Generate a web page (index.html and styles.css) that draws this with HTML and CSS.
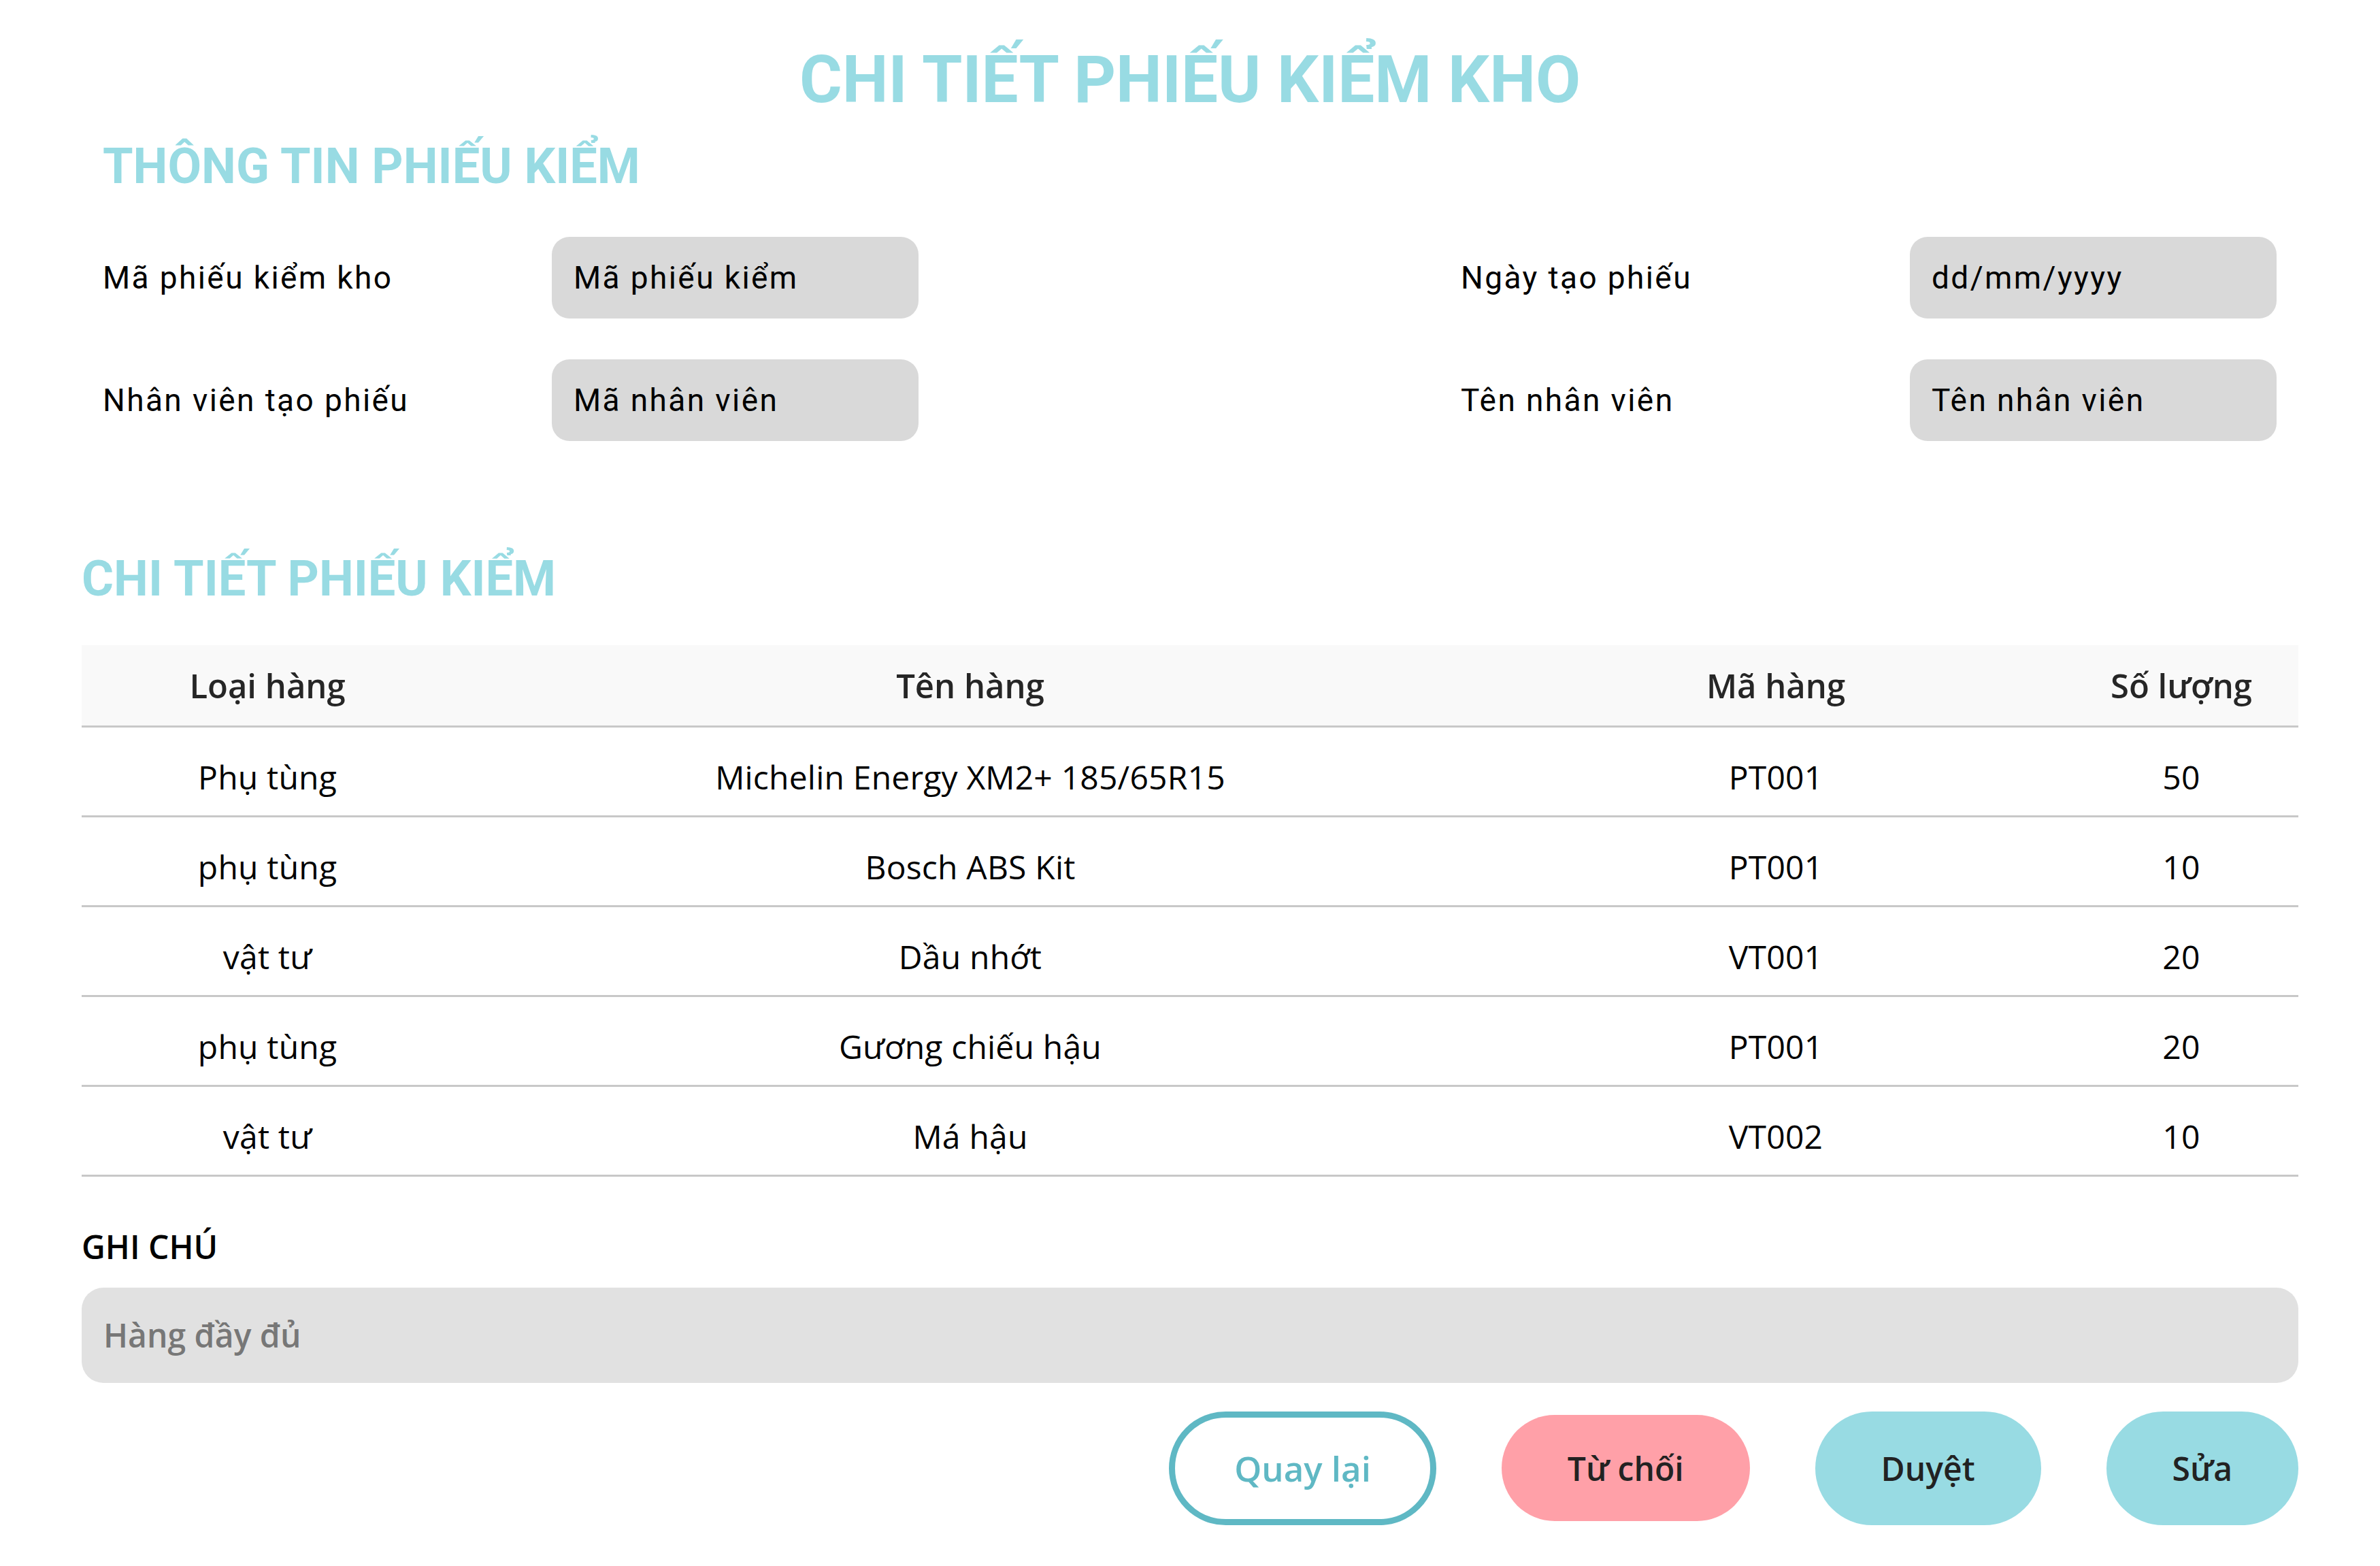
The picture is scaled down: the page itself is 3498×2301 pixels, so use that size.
FILE: index.html
```html
<!DOCTYPE html>
<html lang="vi">
<head>
<meta charset="utf-8">
<title>Chi tiết phiếu kiểm kho</title>
<link rel="stylesheet" href="styles.css">
</head>
<body>
<main class="page">
  <h1 class="title">CHI TIẾT PHIẾU KIỂM KHO</h1>

  <h2 class="section-title section-title--info">THÔNG TIN PHIẾU KIỂM</h2>
  <section class="info">
    <div class="info-group">
      <div class="info-label">Mã phiếu kiểm kho</div>
      <div class="info-box">Mã phiếu kiểm</div>
      <div class="info-label">Nhân viên tạo phiếu</div>
      <div class="info-box">Mã nhân viên</div>
    </div>
    <div class="info-group">
      <div class="info-label">Ngày tạo phiếu</div>
      <div class="info-box">dd/mm/yyyy</div>
      <div class="info-label">Tên nhân viên</div>
      <div class="info-box">Tên nhân viên</div>
    </div>
  </section>

  <h2 class="section-title section-title--detail">CHI TIẾT PHIẾU KIỂM</h2>
  <table class="items">
    <colgroup>
      <col class="col-type">
      <col class="col-name">
      <col class="col-code">
      <col class="col-qty">
    </colgroup>
    <thead>
      <tr><th>Loại hàng</th><th>Tên hàng</th><th>Mã hàng</th><th>Số lượng</th></tr>
    </thead>
    <tbody>
      <tr><td>Phụ tùng</td><td>Michelin Energy XM2+ 185/65R15</td><td>PT001</td><td>50</td></tr>
      <tr><td>phụ tùng</td><td>Bosch ABS Kit</td><td>PT001</td><td>10</td></tr>
      <tr><td>vật tư</td><td>Dầu nhớt</td><td>VT001</td><td>20</td></tr>
      <tr><td>phụ tùng</td><td>Gương chiếu hậu</td><td>PT001</td><td>20</td></tr>
      <tr><td>vật tư</td><td>Má hậu</td><td>VT002</td><td>10</td></tr>
    </tbody>
  </table>

  <div class="note-label">GHI CHÚ</div>
  <div class="note-box">Hàng đầy đủ</div>

  <div class="actions">
    <button class="btn btn--back">Quay lại</button>
    <button class="btn btn--reject">Từ chối</button>
    <button class="btn btn--approve">Duyệt</button>
    <button class="btn btn--edit">Sửa</button>
  </div>
</main>
</body>
</html>
```

FILE: styles.css
```css
* { box-sizing: border-box; }

html, body {
  margin: 0;
  padding: 0;
  background: #ffffff;
}

body {
  font-family: "Open Sans", "Liberation Sans", sans-serif;
  color: #000;
}

.page {
  padding: 61px 120px 40px;
}

.title {
  margin: 0;
  font-family: Roboto, "Liberation Sans", sans-serif;
  font-weight: 700;
  font-size: 96px;
  line-height: 112px;
  color: #98dbe3;
  text-align: center;
}

.section-title {
  margin: 0;
  font-family: Roboto, "Liberation Sans", sans-serif;
  font-weight: 700;
  font-size: 72px;
  line-height: 84px;
  color: #98dbe3;
}

.section-title--info {
  margin-top: 30px;
  padding-left: 31px;
}

.section-title--detail {
  margin-top: 161px;
}

.info {
  margin-top: 61px;
  padding: 0 32px 0 31px;
  display: flex;
  justify-content: space-between;
}

.info-group {
  display: grid;
  grid-template-columns: 660px 539px;
  row-gap: 60px;
  align-items: center;
}

.info-label {
  font-family: Roboto, "Liberation Sans", sans-serif;
  font-size: 46px;
  letter-spacing: 2.4px;
  color: #000;
}

.info-box {
  height: 120px;
  display: flex;
  align-items: center;
  padding-left: 32px;
  background: #d9d9d9;
  border-radius: 26px;
  font-family: Roboto, "Liberation Sans", sans-serif;
  font-size: 46px;
  letter-spacing: 2.4px;
  color: #000;
}

.items {
  margin-top: 55px;
  width: 100%;
  border-collapse: collapse;
  table-layout: fixed;
}

.col-type { width: 546px; }
.col-name { width: 1520px; }
.col-code { width: 848px; }
.col-qty { width: 344px; }

.items th,
.items td {
  padding: 0;
  text-align: center;
  border-bottom: 3px solid #c8c8c8;
}

.items th {
  height: 119px;
  background: #f9f9f9;
  font-weight: 600;
  font-size: 49px;
  color: #262626;
}

.items td {
  height: 132px;
  padding-top: 16px;
  font-size: 48px;
  letter-spacing: 0.2px;
  color: #000;
}

.note-label {
  margin-top: 70px;
  font-weight: 600;
  font-size: 48px;
  line-height: 65px;
  color: #000;
}

.note-box {
  margin-top: 28px;
  height: 140px;
  display: flex;
  align-items: center;
  padding-left: 32px;
  background: #e1e1e1;
  border-radius: 32px;
  font-weight: 600;
  font-size: 48px;
  color: #777777;
}

.actions {
  margin-top: 42px;
  display: flex;
  justify-content: flex-end;
  align-items: center;
  gap: 96px;
}

.btn {
  height: 167px;
  padding: 0 97px;
  border: none;
  border-radius: 84px;
  font-family: "Open Sans", "Liberation Sans", sans-serif;
  font-weight: 600;
  font-size: 48px;
  color: #222;
  cursor: pointer;
}

.btn--back {
  background: #fff;
  border: 9px solid #5fb8c4;
  padding: 0 87px;
  font-size: 51px;
  color: #5fb8c4;
}

.btn--reject {
  height: 156px;
  background: #ffa0a8;
}

.btn--approve,
.btn--edit {
  background: #98dbe3;
}
```
